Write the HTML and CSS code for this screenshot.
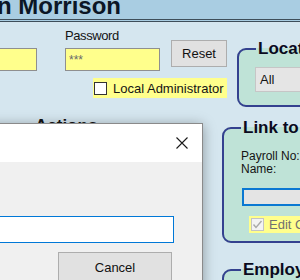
FILE: index.html
```html
<!DOCTYPE html>
<html lang="en">
<head>
    <meta charset="UTF-8">
    <meta name="viewport" content="width=device-width, initial-scale=1.0">
    <title>Clock users</title>
    <link rel="stylesheet" href="styles.css">
</head>
<body>
    <div class="app">
        <header class="banner">
            <h1 class="bannerTitle">n Morrison</h1>
        </header>

        <section class="login">
            <input class="field fieldUser" type="text" value="">
            <label class="caption" for="passField">Password</label>
            <input class="field fieldPass" id="passField" type="text" value="***">
            <button class="btn btnReset" type="button">Reset</button>
            <label class="admin"><span class="tick"></span>Local Administrator</label>
            <fieldset class="group groupLocation">
                <legend>Location</legend>
                <div class="combo">All</div>
            </fieldset>
        </section>

        <section class="lower">
            <div class="actions">
                <h2>Actions</h2>
            </div>
            <div class="side">
                <fieldset class="group groupLink">
                    <legend>Link to Payroll</legend>
                    <div class="info">Payroll No:</div>
                    <div class="info">Name:</div>
                    <div class="linkBox"></div>
                    <label class="edit">
                        <span class="tick tickOff">
                            <svg width="11" height="11" viewBox="0 0 11 11"><polyline points="1.5,5.5 4,8.5 9.5,2" fill="none" stroke="#a9a9a9" stroke-width="1.4"/></svg>
                        </span>Edit Clockings
                    </label>
                </fieldset>
                <fieldset class="group groupEmploy">
                    <legend>Employee</legend>
                </fieldset>
            </div>
        </section>

        <!-- modal over the form -->
        <div class="dialog">
            <div class="dialogBar">
                <svg class="closeX" width="12" height="12" viewBox="0 0 12 12"><path d="M0.5 0.5 L11.5 11.5 M11.5 0.5 L0.5 11.5" stroke="#1a1a1a" stroke-width="1.1" fill="none"/></svg>
            </div>
            <div class="dialogBody">
                <input class="dialogInput" type="text" value="">
                <button class="btn btnCancel" type="button">Cancel</button>
            </div>
        </div>
    </div>
</body>
</html>
```

FILE: styles.css
```css
body{margin: 0; width: 300px; height: 280px; overflow: hidden; background-color: #d5e6ef;}
.app{position: relative; width: 300px; height: 280px; overflow: hidden; font-family: "Liberation Sans", Arial, sans-serif; color: #141414;}

.banner{height: 19px; background-color: #a9cde2; border-bottom: 3px double #3e4e5a; overflow: hidden;}
.bannerTitle{margin: -6px 0 0 -3px; font-size: 24px; line-height: 24px; font-weight: bold; color: #0b1626; white-space: nowrap;}

.login{display: grid; grid-template-columns: 65px 106px 66px 1fr; grid-template-rows: 26px 23px 27px;}
.field{box-sizing: border-box; height: 23px; margin: 0; padding: 0 3px; border: 1px solid #8f8f8f; background-color: #ffff8c; font-family: "Liberation Sans", Arial, sans-serif; font-size: 12px; color: #6a6a6a; outline: none;}
.fieldUser{grid-column: 1; grid-row: 2; width: 47px; margin-left: -10px;}
.fieldPass{grid-column: 2; grid-row: 2; width: 95px;}
.caption{grid-column: 2; grid-row: 1; align-self: start; margin-top: 6px; font-size: 13px; line-height: 15px; letter-spacing: -0.4px;}
.btn{box-sizing: border-box; margin: 0; padding: 0; background-color: #e1e1e1; border: 1px solid #adadad; font-family: "Liberation Sans", Arial, sans-serif; font-size: 13px; color: #111;}
.btnReset{grid-column: 3; grid-row: 1 / 3; align-self: start; margin-top: 18px; width: 56px; height: 27px;}
.admin{grid-column: 2 / 4; grid-row: 3; margin: 7px 0 0 28px; width: 134px; height: 20px; display: flex; align-items: center; background-color: #ffff8c; font-size: 13px; white-space: nowrap;}
.tick{box-sizing: border-box; width: 13px; height: 13px; margin: 0 6px 0 1px; border: 1px solid #333; background-color: #fff; flex: none;}

.group{margin: 0; border: 2px solid #34418f; border-radius: 9px; background-color: #bfe3d7; min-inline-size: 0;}
.group>legend{padding: 0 2px; font-size: 17px; line-height: 20px; font-weight: bold; color: #0a0a1e; white-space: nowrap;}
.groupLocation{grid-column: 4; grid-row: 1 / 4; align-self: start; box-sizing: border-box; width: 120px; margin-top: 17px; padding: 8px 0 13px 17px;}
.combo{box-sizing: border-box; height: 25px; margin-left: -1px; padding-left: 4px; background-color: #e5e5e5; border: 1px solid #c6c6c6; font-size: 13px; line-height: 23px;}

.lower{display: flex;}
.actions{flex: none; width: 222px;}
.actions h2{margin: 18px 0 0 35px; font-size: 17px; line-height: 20px;}
.side{flex: none; width: 200px;}
.groupLink{margin-top: 20px; padding: 12px 0 8px 17px;}
.info{font-size: 12px; line-height: 13px; white-space: nowrap;}
.linkBox{box-sizing: border-box; height: 18px; margin: 12px 0 0 1px; border: 2px solid #0a78d2; background-color: #e4e4e4;}
.edit{display: flex; align-items: center; height: 17px; margin: 10px 0 0 8px; background-color: #ffff8c; font-size: 13px; color: #707070; white-space: nowrap;}
.tickOff{display: flex; align-items: center; justify-content: center; margin: 0 5px 0 2px; border-color: #c4c4c4; background-color: #f3f3f3;}
.groupEmploy{margin-top: 17px; height: 60px; padding: 0 0 0 17px;}

.dialog{position: absolute; left: -20px; top: 123px; width: 223px; height: 200px; box-sizing: border-box; border: 1px solid #8a8a8a; background-color: #f0f0f0; box-shadow: 0 2px 12px rgba(0,0,0,0.35);}
.dialogBar{height: 38px; background-color: #fff; display: flex; justify-content: flex-end; align-items: center; padding-right: 14px;}
.dialogBody{display: flex; flex-direction: column; align-items: flex-start; padding-top: 54px;}
.dialogInput{box-sizing: border-box; width: 193px; height: 27px; margin: 0; border: 1px solid #0078d7; background-color: #fff; outline: none;}
.btnCancel{margin: 9px 0 0 77px; width: 114px; height: 30px;}
```
